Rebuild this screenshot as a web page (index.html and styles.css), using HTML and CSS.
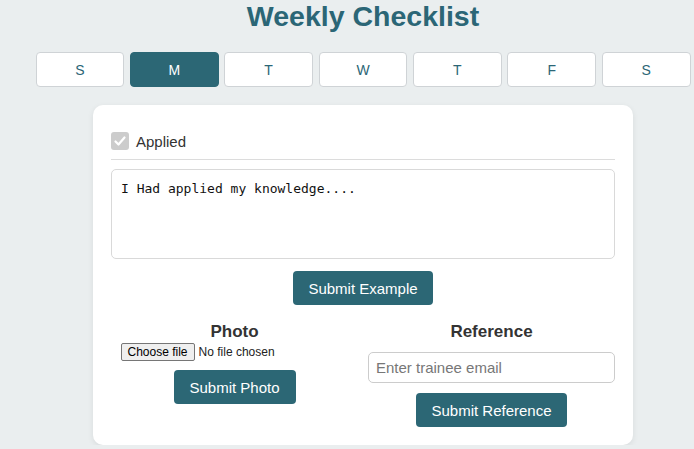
FILE: index.html
```html
<!DOCTYPE html>
<html lang="en">
<head>
<meta charset="utf-8">
<title>Weekly Checklist</title>
<link rel="stylesheet" href="styles.css">
</head>
<body>
<div class="page">
  <h1 class="title">Weekly Checklist</h1>
  <div class="days">
    <button class="day">S</button>
    <button class="day active">M</button>
    <button class="day">T</button>
    <button class="day">W</button>
    <button class="day">T</button>
    <button class="day">F</button>
    <button class="day">S</button>
  </div>
  <div class="card">
    <label class="check-row">
      <span class="checkbox"><svg width="14" height="14" viewBox="0 0 14 14"><path d="M2.5 7.5 L5.5 10.5 L11.5 3.5" fill="none" stroke="#fff" stroke-width="2.2" stroke-linecap="round" stroke-linejoin="round"/></svg></span>
      <span class="check-label">Applied</span>
    </label>
    <textarea class="notes">I Had applied my knowledge....</textarea>
    <div class="center">
      <button class="btn btn-example">Submit Example</button>
    </div>
    <div class="cols">
      <div class="col">
        <h3 class="col-title">Photo</h3>
        <div class="file">
          <span class="file-btn">Choose file</span><span class="file-text">No file chosen</span>
        </div>
        <button class="btn btn-photo">Submit Photo</button>
      </div>
      <div class="col">
        <h3 class="col-title">Reference</h3>
        <input class="email" type="text" placeholder="Enter trainee email">
        <button class="btn btn-ref">Submit Reference</button>
      </div>
    </div>
  </div>
</div>
</body>
</html>
```

FILE: styles.css
```css
html, body {
  margin: 0;
  padding: 0;
  background: #eaeeef;
  overflow: hidden;
}
body {
  font-family: "Liberation Sans", Arial, sans-serif;
  color: #333;
}
.page {
  width: 726px;
  display: flex;
  flex-direction: column;
  align-items: center;
}
.title {
  margin: 0;
  height: 36px;
  line-height: 32px;
  font-size: 28.5px;
  font-weight: bold;
  color: #2b6676;
}
.days {
  margin-top: 16px;
  display: flex;
  gap: 5.5px;
  width: 655px;
}
.day {
  flex: 1;
  height: 35px;
  background: #fff;
  border: 1px solid #cfd3d6;
  border-radius: 4px;
  font-family: "Liberation Sans", Arial, sans-serif;
  font-size: 14px;
  color: #2b6676;
  padding: 0;
}
.day.active {
  background: #2c6775;
  border-color: #2c6775;
  color: #fff;
}
.card {
  margin-top: 18px;
  width: 540px;
  box-sizing: border-box;
  background: #fff;
  border-radius: 10px;
  box-shadow: 0 2px 6px rgba(0,0,0,0.08);
  padding: 18px 18px 18px;
}
.check-row {
  display: flex;
  align-items: center;
  gap: 7px;
  padding: 9px 0 9px;
  border-bottom: 1px solid #dcdcdc;
}
.checkbox {
  width: 18px;
  height: 18px;
  border-radius: 3px;
  background: #cccccc;
  display: flex;
  align-items: center;
  justify-content: center;
}
.check-label {
  font-size: 15px;
  color: #333;
}
.notes {
  display: block;
  margin-top: 9px;
  width: 100%;
  height: 90px;
  box-sizing: border-box;
  border: 1px solid #d9d9d9;
  border-radius: 5px;
  padding: 10px 9px;
  font-family: "DejaVu Sans Mono", monospace;
  font-size: 13px;
  line-height: 18px;
  color: #111;
  resize: none;
}
.center {
  display: flex;
  justify-content: center;
  margin-top: 12px;
}
.btn {
  height: 34px;
  border: none;
  border-radius: 4px;
  background: #2c6775;
  color: #fff;
  font-family: "Liberation Sans", Arial, sans-serif;
  font-size: 15px;
  padding: 0;
}
.btn-example { width: 140px; }
.btn-photo { width: 122px; margin-top: 9px; }
.btn-ref { width: 151px; margin-top: 10px; }
.cols {
  margin-top: 17px;
  display: grid;
  grid-template-columns: 1fr 1fr;
  gap: 10px;
}
.col {
  display: flex;
  flex-direction: column;
  align-items: center;
}
.col-title {
  margin: 0;
  font-size: 17px;
  line-height: 20px;
  font-weight: bold;
  color: #333;
}
.file {
  margin-top: 1px;
  width: 228px;
  display: flex;
  align-items: center;
  font-size: 12px;
  color: #222;
}
.file-btn {
  display: inline-block;
  height: 16px;
  line-height: 16px;
  padding: 0 6px;
  border: 1px solid #767676;
  border-radius: 2px;
  background: #efefef;
  color: #000;
  margin-right: 4px;
}
.file-text { color: #222; }
.email {
  margin-top: 10px;
  width: 100%;
  height: 31px;
  box-sizing: border-box;
  border: 1px solid #cccccc;
  border-radius: 5px;
  padding: 0 7px;
  font-family: "Liberation Sans", Arial, sans-serif;
  font-size: 15px;
}
.email::placeholder { color: #777; }
```
